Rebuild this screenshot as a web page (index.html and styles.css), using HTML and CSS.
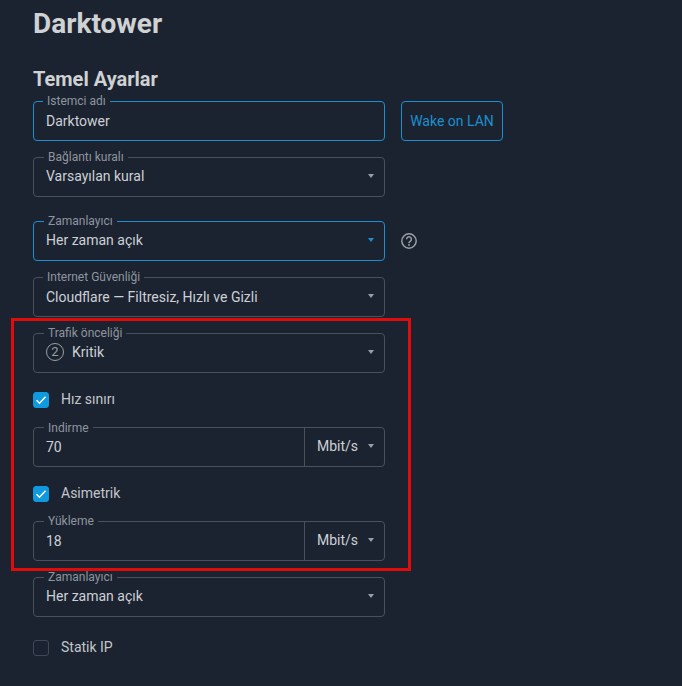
FILE: index.html
```html
<!DOCTYPE html>
<html lang="en">
<head>
    <meta charset="UTF-8">
    <meta name="viewport" content="width=device-width, initial-scale=1.0">
    <title>Darktower</title>
    <link rel="stylesheet" href="styles.css">
</head>
<body>
    <div class="page">
        <h1>Darktower</h1>
        <h2>Temel Ayarlar</h2>

        <div class="row row-first">
            <div class="field active">
                <span class="legend legend-tight">Istemci adı</span>
                <span class="value value-low">Darktower</span>
            </div>
            <button class="wake">Wake on LAN</button>
        </div>

        <div class="row">
            <div class="field">
                <span class="legend">Bağlantı kuralı</span>
                <span class="value">Varsayılan kural</span>
                <span class="caret"></span>
            </div>
        </div>

        <div class="row row-gap">
            <div class="field active">
                <span class="legend">Zamanlayıcı</span>
                <span class="value">Her zaman açık</span>
                <span class="caret"></span>
            </div>
            <svg class="help" width="18" height="18" viewBox="0 0 18 18" fill="none" stroke="#9a9fa6">
                <circle cx="9" cy="9" r="7.2" stroke-width="1.5"/>
                <path d="M6.6 7.2a2.4 2.4 0 1 1 3.8 2c-.9.6-1.4 1-1.4 2" stroke-width="1.5"/>
                <circle cx="9" cy="13" r=".9" fill="#9a9fa6" stroke="none"/>
            </svg>
        </div>

        <div class="row">
            <div class="field">
                <span class="legend legend-tight">Internet Güvenliği</span>
                <span class="value value-low">Cloudflare — Filtresiz, Hızlı ve Gizli</span>
                <span class="caret"></span>
            </div>
        </div>

        <div class="row">
            <div class="field">
                <span class="legend">Trafik önceliği</span>
                <span class="badge">2</span>
                <span class="value">Kritik</span>
                <span class="caret"></span>
            </div>
        </div>

        <label class="check">
            <span class="box checked">
                <svg width="12" height="10" viewBox="0 0 12 10" fill="none" stroke="#fff" stroke-width="1.5"><path d="M1.5 5.2l3 3 6-6.4"/></svg>
            </span>
            Hız sınırı
        </label>

        <div class="row">
            <div class="field">
                <span class="legend legend-low">Indirme</span>
                <span class="value value-low">70</span>
                <span class="unit">Mbit/s<span class="caret"></span></span>
            </div>
        </div>

        <label class="check">
            <span class="box checked">
                <svg width="12" height="10" viewBox="0 0 12 10" fill="none" stroke="#fff" stroke-width="1.5"><path d="M1.5 5.2l3 3 6-6.4"/></svg>
            </span>
            Asimetrik
        </label>

        <div class="row">
            <div class="field">
                <span class="legend">Yükleme</span>
                <span class="value value-low">18</span>
                <span class="unit">Mbit/s<span class="caret"></span></span>
            </div>
        </div>

        <div class="row">
            <div class="field">
                <span class="legend">Zamanlayıcı</span>
                <span class="value">Her zaman açık</span>
                <span class="caret"></span>
            </div>
        </div>

        <label class="check check-last">
            <span class="box"></span>
            Statik IP
        </label>
    </div>

    <div class="highlight"></div>
</body>
</html>
```

FILE: styles.css
```css
body {
    font-family: Roboto, "Liberation Sans", sans-serif;
    background-color: #1b2331;
    color: #c9ccd0;
    margin: 0;
    height: 686px;
    overflow: hidden;
    position: relative;
}

.page {
    padding: 0 33px;
}

h1 {
    font-size: 28px;
    font-weight: 700;
    line-height: 32px;
    margin: 0;
    padding-top: 8px;
    color: #cfd1d3;
}

h2 {
    font-size: 20px;
    font-weight: 700;
    line-height: 24px;
    margin: 0;
    padding-top: 27px;
    color: #cfd1d3;
}

.row {
    display: flex;
    align-items: center;
    margin-top: 16px;
}

.row-first {
    margin-top: 10px;
}

.row-gap {
    margin-top: 24px;
}

.field {
    box-sizing: border-box;
    position: relative;
    display: flex;
    align-items: center;
    width: 352px;
    height: 40px;
    padding: 0 12px 2px;
    border: 1px solid #4a515c;
    border-radius: 4px;
    font-size: 14px;
    color: #cdd0d4;
}

.field.active {
    border-color: #1d8fcf;
}

.legend {
    position: absolute;
    top: -8px;
    left: 10px;
    padding: 0 4px;
    font-size: 12px;
    line-height: 14px;
    color: #8f959d;
    background-color: #1b2331;
}

.legend-tight {
    left: 9px;
}

.legend-low {
    top: -7px;
}

.value {
    flex: 1;
}

.value-low {
    padding-top: 2px;
}

.caret {
    width: 0;
    height: 0;
    border-left: 3px solid transparent;
    border-right: 3px solid transparent;
    border-top: 4px solid #9a9fa6;
    margin-right: -2px;
}

.active .caret {
    border-top-color: #1d8fcf;
}

.badge {
    box-sizing: border-box;
    width: 18px;
    height: 18px;
    border: 1px solid #9a9fa6;
    border-radius: 50%;
    margin-right: 8px;
    font-size: 13px;
    line-height: 16px;
    text-align: center;
    color: #9a9fa6;
}

.unit {
    display: flex;
    align-items: center;
    gap: 10px;
    align-self: stretch;
    margin: 0 -12px -2px 0;
    padding: 0 12px 2px 12px;
    border-left: 1px solid #4a515c;
}

.wake {
    box-sizing: border-box;
    height: 40px;
    width: 102px;
    margin-left: 16px;
    padding: 0;
    background: none;
    border: 1px solid #1d8fcf;
    border-radius: 4px;
    font-family: inherit;
    font-size: 14px;
    color: #1d8fcf;
}

.help {
    margin-left: 15px;
}

.check {
    display: flex;
    align-items: flex-start;
    gap: 12px;
    height: 18px;
    margin: 18px 0;
    font-size: 14px;
    line-height: 16px;
    color: #c3c6ca;
}

.check-last {
    margin-top: 22px;
}

.box {
    box-sizing: border-box;
    display: flex;
    align-items: center;
    justify-content: center;
    width: 16px;
    height: 16px;
    margin-top: 1px;
    border: 1px solid #3d4859;
    border-radius: 3px;
}

.box.checked {
    background-color: #0f9ae0;
    border-color: #0f9ae0;
}

.highlight {
    position: absolute;
    left: 11px;
    top: 318px;
    width: 394px;
    height: 247px;
    border: 3px solid #e00b0b;
}
```
